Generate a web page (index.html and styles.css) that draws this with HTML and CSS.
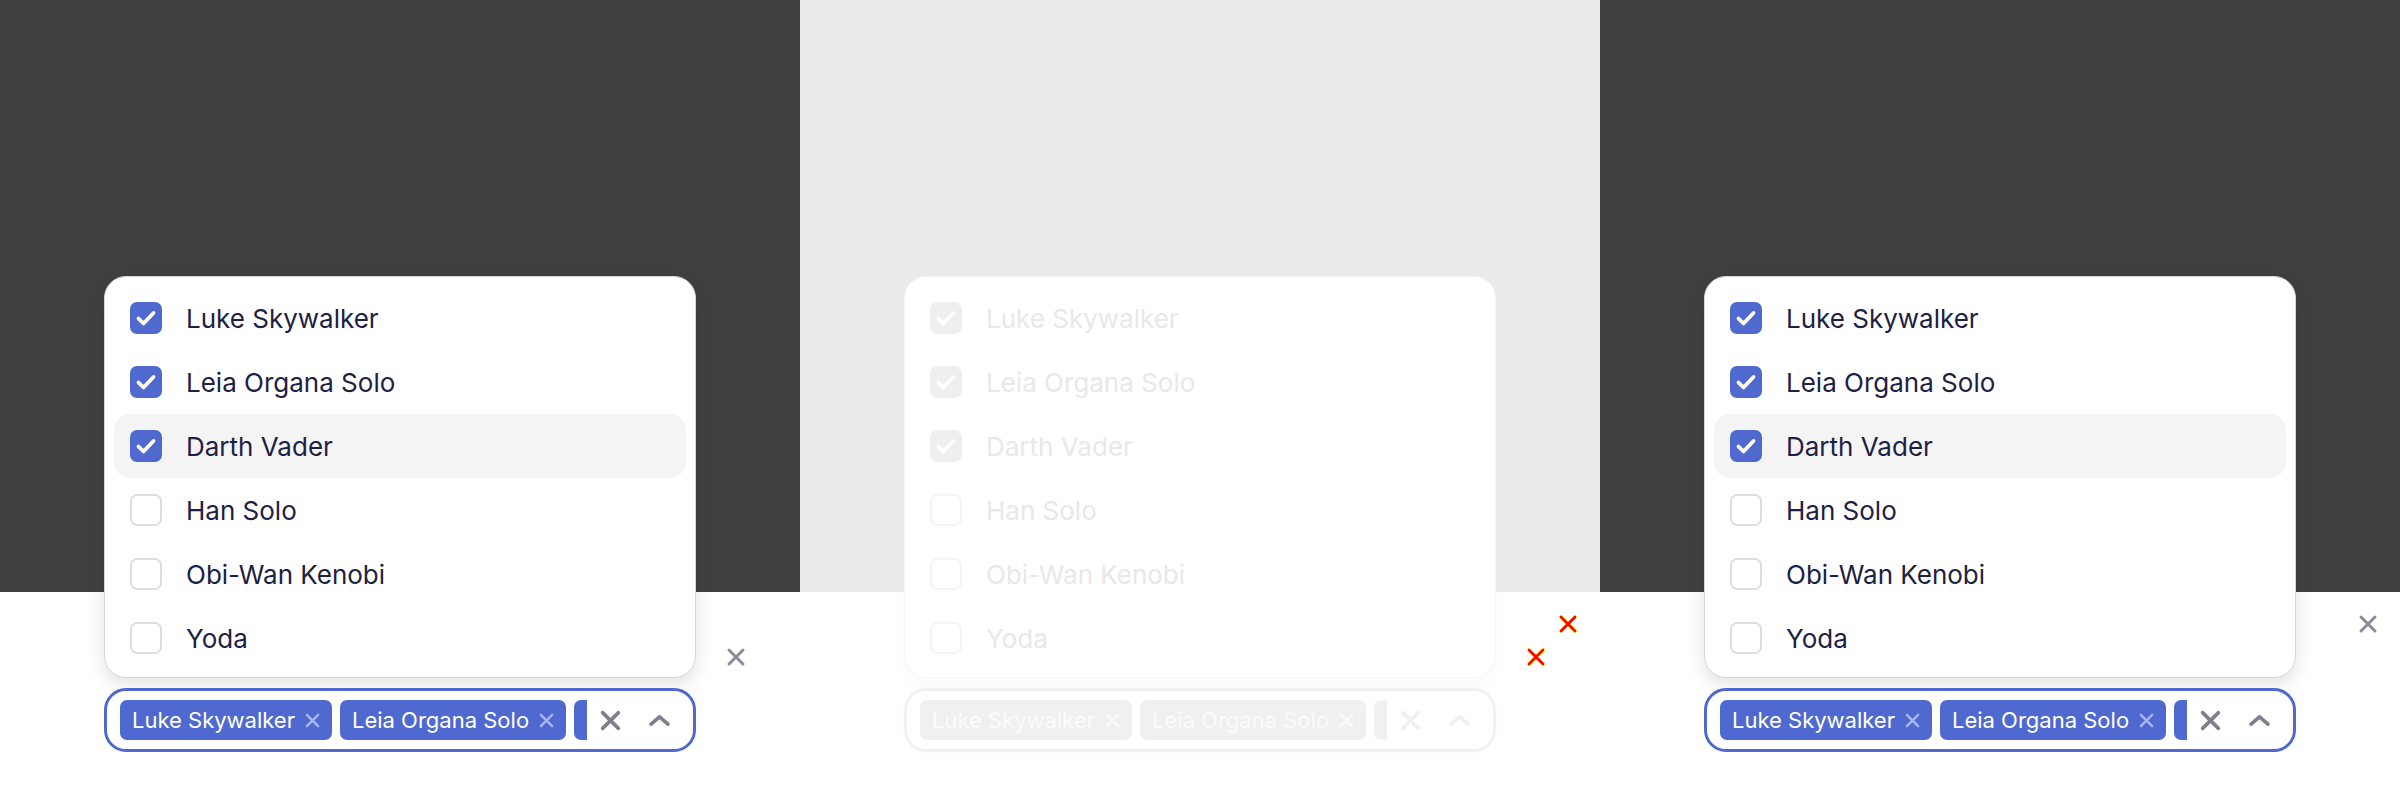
FILE: index.html
```html
<!DOCTYPE html>
<html lang="en">
<head>
<meta charset="utf-8">
<title>Multiselect</title>
<link rel="stylesheet" href="styles.css">
</head>
<body>
<div class="stage">

  <section class="panel dark">
    <div class="widget">
      <ul class="menu">
        <li class="option"><span class="box on"><svg viewBox="0 0 32 32"><path d="M8.5 16.5 L13.5 21.5 L23.5 11"/></svg></span><span class="label">Luke Skywalker</span></li>
        <li class="option"><span class="box on"><svg viewBox="0 0 32 32"><path d="M8.5 16.5 L13.5 21.5 L23.5 11"/></svg></span><span class="label">Leia Organa Solo</span></li>
        <li class="option hover"><span class="box on"><svg viewBox="0 0 32 32"><path d="M8.5 16.5 L13.5 21.5 L23.5 11"/></svg></span><span class="label">Darth Vader</span></li>
        <li class="option"><span class="box"></span><span class="label">Han Solo</span></li>
        <li class="option"><span class="box"></span><span class="label">Obi-Wan Kenobi</span></li>
        <li class="option"><span class="box"></span><span class="label">Yoda</span></li>
      </ul>
      <div class="field">
        <div class="chips">
          <span class="chip">Luke Skywalker<svg class="chip-x" viewBox="0 0 16 16"><path d="M2 2 L14 14 M14 2 L2 14"/></svg></span>
          <span class="chip">Leia Organa Solo<svg class="chip-x" viewBox="0 0 16 16"><path d="M2 2 L14 14 M14 2 L2 14"/></svg></span>
          <span class="chip">Darth Vader<svg class="chip-x" viewBox="0 0 16 16"><path d="M2 2 L14 14 M14 2 L2 14"/></svg></span>
        </div>
        <svg class="clear" viewBox="0 0 20 20"><path d="M2.5 2.5 L17.5 17.5 M17.5 2.5 L2.5 17.5"/></svg>
        <svg class="chev" viewBox="0 0 20 10"><path d="M2 8.5 L10 1.5 L18 8.5"/></svg>
      </div>
    </div>
    <svg class="mark mark-low" viewBox="0 0 20 20"><path d="M3 3 L17 17 M17 3 L3 17"/></svg>
  </section>

  <section class="panel diff">
    <div class="widget">
      <ul class="menu">
        <li class="option"><span class="box on"><svg viewBox="0 0 32 32"><path d="M8.5 16.5 L13.5 21.5 L23.5 11"/></svg></span><span class="label">Luke Skywalker</span></li>
        <li class="option"><span class="box on"><svg viewBox="0 0 32 32"><path d="M8.5 16.5 L13.5 21.5 L23.5 11"/></svg></span><span class="label">Leia Organa Solo</span></li>
        <li class="option hover"><span class="box on"><svg viewBox="0 0 32 32"><path d="M8.5 16.5 L13.5 21.5 L23.5 11"/></svg></span><span class="label">Darth Vader</span></li>
        <li class="option"><span class="box"></span><span class="label">Han Solo</span></li>
        <li class="option"><span class="box"></span><span class="label">Obi-Wan Kenobi</span></li>
        <li class="option"><span class="box"></span><span class="label">Yoda</span></li>
      </ul>
      <div class="field">
        <div class="chips">
          <span class="chip">Luke Skywalker<svg class="chip-x" viewBox="0 0 16 16"><path d="M2 2 L14 14 M14 2 L2 14"/></svg></span>
          <span class="chip">Leia Organa Solo<svg class="chip-x" viewBox="0 0 16 16"><path d="M2 2 L14 14 M14 2 L2 14"/></svg></span>
          <span class="chip">Darth Vader<svg class="chip-x" viewBox="0 0 16 16"><path d="M2 2 L14 14 M14 2 L2 14"/></svg></span>
        </div>
        <svg class="clear" viewBox="0 0 20 20"><path d="M2.5 2.5 L17.5 17.5 M17.5 2.5 L2.5 17.5"/></svg>
        <svg class="chev" viewBox="0 0 20 10"><path d="M2 8.5 L10 1.5 L18 8.5"/></svg>
      </div>
    </div>
    <svg class="mark mark-high red" viewBox="0 0 20 20"><path class="glow" d="M3 3 L17 17 M17 3 L3 17"/><path d="M3 3 L17 17 M17 3 L3 17"/></svg>
    <svg class="mark mark-low red" viewBox="0 0 20 20"><path class="glow" d="M3 3 L17 17 M17 3 L3 17"/><path d="M3 3 L17 17 M17 3 L3 17"/></svg>
  </section>

  <section class="panel dark">
    <div class="widget">
      <ul class="menu">
        <li class="option"><span class="box on"><svg viewBox="0 0 32 32"><path d="M8.5 16.5 L13.5 21.5 L23.5 11"/></svg></span><span class="label">Luke Skywalker</span></li>
        <li class="option"><span class="box on"><svg viewBox="0 0 32 32"><path d="M8.5 16.5 L13.5 21.5 L23.5 11"/></svg></span><span class="label">Leia Organa Solo</span></li>
        <li class="option hover"><span class="box on"><svg viewBox="0 0 32 32"><path d="M8.5 16.5 L13.5 21.5 L23.5 11"/></svg></span><span class="label">Darth Vader</span></li>
        <li class="option"><span class="box"></span><span class="label">Han Solo</span></li>
        <li class="option"><span class="box"></span><span class="label">Obi-Wan Kenobi</span></li>
        <li class="option"><span class="box"></span><span class="label">Yoda</span></li>
      </ul>
      <div class="field">
        <div class="chips">
          <span class="chip">Luke Skywalker<svg class="chip-x" viewBox="0 0 16 16"><path d="M2 2 L14 14 M14 2 L2 14"/></svg></span>
          <span class="chip">Leia Organa Solo<svg class="chip-x" viewBox="0 0 16 16"><path d="M2 2 L14 14 M14 2 L2 14"/></svg></span>
          <span class="chip">Darth Vader<svg class="chip-x" viewBox="0 0 16 16"><path d="M2 2 L14 14 M14 2 L2 14"/></svg></span>
        </div>
        <svg class="clear" viewBox="0 0 20 20"><path d="M2.5 2.5 L17.5 17.5 M17.5 2.5 L2.5 17.5"/></svg>
        <svg class="chev" viewBox="0 0 20 10"><path d="M2 8.5 L10 1.5 L18 8.5"/></svg>
      </div>
    </div>
    <svg class="mark mark-high" viewBox="0 0 20 20"><path d="M3 3 L17 17 M17 3 L3 17"/></svg>
  </section>

</div>
</body>
</html>
```

FILE: styles.css
```css
* { box-sizing: border-box; }

html, body {
  margin: 0;
  padding: 0;
  background: #ffffff;
}

body {
  font-family: "Inter", "Liberation Sans", sans-serif;
  color: #1c2142;
}

.stage {
  display: flex;
  width: 2400px;
  height: 800px;
}

.panel {
  position: relative;
  width: 800px;
  height: 800px;
  flex: none;
  padding: 276px 0 0 104px;
  background: linear-gradient(#404040 0, #404040 592px, #ffffff 592px);
}

.panel.diff {
  background: linear-gradient(#ebebeb 0, #ebebeb 592px, #ffffff 592px);
}

.widget {
  width: 592px;
  display: flex;
  flex-direction: column;
  gap: 10px;
}

/* dropdown menu */
.menu {
  list-style: none;
  margin: 0;
  padding: 9px 9px 7px;
  background: #ffffff;
  border: 1px solid #d6d6d6;
  border-radius: 22px;
  box-shadow: 0 6px 18px rgba(0, 0, 0, 0.12);
}

.option {
  height: 64px;
  display: flex;
  align-items: center;
  gap: 24px;
  padding-left: 16px;
  border-radius: 16px;
  font-size: 26px;
  line-height: 1;
}

.label {
  padding-top: 2px;
}

.option.hover {
  background: #f4f4f4;
}

.box {
  width: 32px;
  height: 32px;
  flex: none;
  border: 2px solid #dedede;
  border-radius: 7px;
  background: #ffffff;
  display: flex;
  align-items: center;
  justify-content: center;
}

.box.on {
  border: none;
  background: #5069d0;
}

.box svg {
  width: 32px;
  height: 32px;
  fill: none;
  stroke: #ffffff;
  stroke-width: 3.8;
  stroke-linecap: round;
  stroke-linejoin: round;
}

/* field */
.field {
  height: 64px;
  border: 3px solid #5069d0;
  border-radius: 22px;
  background: #ffffff;
  display: flex;
  align-items: center;
  padding: 0 23px 0 13px;
}

.chips {
  flex: 1;
  min-width: 0;
  display: flex;
  gap: 8px;
  overflow: hidden;
  margin-right: 13px;
}

.chip {
  flex: none;
  height: 40px;
  display: flex;
  align-items: center;
  gap: 10px;
  padding: 0 12px;
  background: #5069d0;
  color: #ffffff;
  border-radius: 7px;
  font-size: 22px;
  white-space: nowrap;
}

.chip-x {
  width: 15px;
  height: 15px;
  fill: none;
  stroke: #abb6ea;
  stroke-width: 2.6;
  stroke-linecap: round;
}

.clear {
  width: 21px;
  height: 21px;
  flex: none;
  fill: none;
  stroke: #7f7f8c;
  stroke-width: 3.4;
  stroke-linecap: round;
  margin-right: 28px;
}

.chev {
  width: 21px;
  height: 11px;
  flex: none;
  fill: none;
  stroke: #7f7f8c;
  stroke-width: 3.4;
  stroke-linecap: round;
  stroke-linejoin: round;
}

/* diff markers */
.mark {
  position: absolute;
  width: 20px;
  height: 20px;
  fill: none;
  stroke: #8a8a98;
  stroke-width: 3;
  stroke-linecap: round;
}

.mark-low { left: 726px; top: 647px; }
.mark-high { left: 758px; top: 614px; }

.mark.red path { stroke: #ff0000; stroke-width: 2.6; }
.mark.red path.glow { stroke: #ffff00; stroke-width: 3.8; }

/* faded diff panel */
.diff .menu {
  border-color: #f6f6f6;
  box-shadow: 0 6px 18px rgba(0, 0, 0, 0.025);
}
.diff .option { color: #e8e8e8; }
.diff .option.hover { background: #ffffff; }
.diff .box { border-color: #f5f5f5; }
.diff .box.on { background: #efefef; }
.diff .field {
  border-color: #f2f2f2;
  box-shadow: 0 0 16px rgba(0, 0, 0, 0.02);
}
.diff .chip { background: #f0f0f0; color: #fbfbfb; }
.diff .chip-x { stroke: #fafafa; }
.diff .clear, .diff .chev { stroke: #f0f0f0; }
```
